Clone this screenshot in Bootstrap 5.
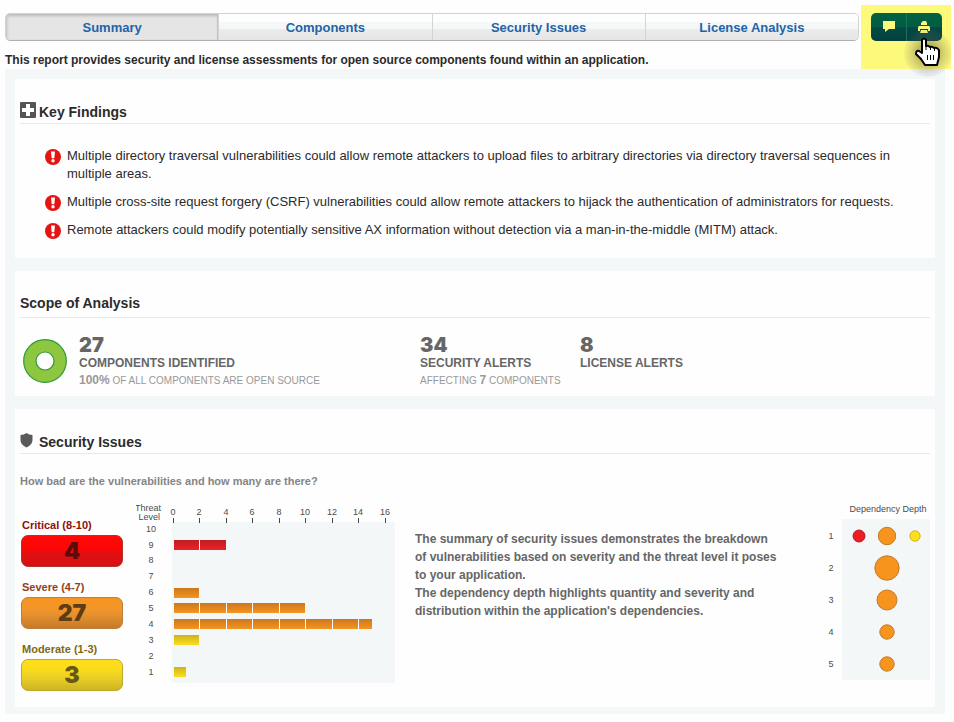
<!DOCTYPE html>
<html lang="en">
<head>
<meta charset="utf-8">
<meta name="viewport" content="width=device-width, initial-scale=1">
<title>Application Security Report</title>
<link href="https://cdn.jsdelivr.net/npm/bootstrap@5.3.0/dist/css/bootstrap.min.css" rel="stylesheet">
<style>
body { font: 13px/18px "Liberation Sans", Arial, sans-serif; color: #2b2b2b; background: #fefefe; }
h2, p, ul { margin: 0; }
.report-top { padding: 5px 3px 0 5px; gap: 2px; }
.report-tabs { margin-top: 8px; height: 28px; border: 1px solid #d2d2d2; border-bottom-color: #b0b0b0; border-radius: 5px; overflow: hidden; }
.report-tabs a { flex: 1 1 0; line-height: 27px; font-size: 13px; font-weight: 700; text-align: center; text-decoration: none; color: #2263a8; border-left: 1px solid #d4d4d4; background: linear-gradient(#fefefe 0 30%, #f4f8f9 32% 56%, #ebebeb 60%, #e6e6e6); }
.report-tabs a:first-child { border-left: 0; }
.report-tabs a.active { background: #e5e5e5; box-shadow: inset 1px 2px 3px #bbb, inset -1px 0 1px #c4c4c4; }
.intro { margin-top: 10px; font-size: 12px; font-weight: 700; }
.tool-zone { width: 90px; height: 64px; padding: 8px 9px 0 10px; background: #fdf97b; }
.tool-group { height: 28px; border-radius: 5px; overflow: hidden; background: linear-gradient(#00633f, #045c46 50%, #044a43 52%, #03403f); }
.tool-group button { flex: 1; padding: 0; border: 0; background: none; line-height: 0; }
.tool-group button + button { border-left: 1px solid #1f7259; }
.pointer { left: 40px; top: 20px; pointer-events: none; z-index: 2; }
.report-body { margin: 0 9px 8px 5px; padding: 10px 10px 7px; background: #f3f7f8; gap: 13px; }
.panel { background: #fefefe; padding: 0 5px; }
.panel-head { padding: 23px 0 1px; border-bottom: 1px solid #e7eaea; gap: 3px; }
.panel-head h2 { font-size: 14px; line-height: 20px; font-weight: 700; }
.scope .panel-head { padding: 22px 0 4px; }
.findings { padding: 23px 18px 19px 25px; gap: 10px; }
.findings li { gap: 6px; }
.findings svg { margin-top: 2px; }
.scope-row { padding: 18px 0 6px 3px; color: #666; }
.ring { margin: 3px 12px 0 0; }
.fact-wide { width: 341px; }
.fact-mid { width: 160px; }
.fact-num { font: 900 20px/19px Inter, "Liberation Sans", sans-serif; }
.fact-name { font-size: 12px; line-height: 16px; font-weight: 700; }
.fact-note { font-size: 10px; line-height: 18px; color: #999; }
.fact-note b { font-size: 12px; }
.question { margin-top: 18px; font-size: 11px; font-weight: 700; color: #858585; }
.issues { padding: 8px 0 16px; }
.levels { width: 102px; margin: 18px 13px 0 1px; gap: 11px; }
.level-name { font-size: 11px; line-height: 19px; font-weight: 700; padding-left: 1px; }
.level-box { height: 32px; border-radius: 7px; font: 900 23px/30px Inter, "Liberation Sans", sans-serif; text-align: center; border: 1px solid; }
.crit { color: #8f0f0f; } .sev { color: #93401b; } .mod { color: #7c6a14; }
.crit .level-box { color: #5c0b0d; background: linear-gradient(#ff0a08, #fa0606 45%, #dd1012 60%, #d60f10); border-color: #b3322b; }
.sev .level-box { color: #5e3d16; background: linear-gradient(#f7951f, #f2952a 40%, #df8c30 65%, #c67a24); border-color: #bd7f3e; }
.mod .level-box { color: #665717; background: linear-gradient(#fedd1b, #fbdc1c 30%, #e6cc28 65%, #cdb420); border-color: #bda92f; }
.summary-text { flex: 0 1 390px; margin: 32px 0 0 20px; font-size: 12px; font-weight: 700; color: #666; }
.chart text { font-family: "Liberation Sans", Arial, sans-serif; font-size: 9px; fill: #4c4c4c; }
</style>
</head>
<body>
<header class="report-top d-flex">
  <div class="flex-grow-1">
    <nav class="report-tabs d-flex" aria-label="Report sections">
      <a href="#summary" class="active" aria-current="page">Summary</a>
      <a href="#components">Components</a>
      <a href="#security">Security Issues</a>
      <a href="#license">License Analysis</a>
    </nav>
    <p class="intro">This report provides security and license assessments for open source components found within an application.</p>
  </div>
  <div class="tool-zone position-relative flex-shrink-0">
    <div class="tool-group d-flex">
      <button type="button" aria-label="Comment"><svg width="13" height="12" viewBox="0 0 13 12" fill="#fdf97b"><path d="M1 0h12v8H7L3 11V8H1z"/></svg></button>
      <button type="button" aria-label="Print"><svg width="14" height="14" viewBox="0 0 14 14" fill="#fdf97b"><path d="M3 5V3l2-2h3l1 2v2zM1 6h10l1 1v4h-2V9H2v2H0V7zM3 10h6l1 3H2z"/></svg></button>
    </div>
    <svg class="pointer position-absolute" width="56" height="56" viewBox="0 0 56 56">
      <defs><radialGradient id="halo"><stop offset=".25" stop-color="#554f20" stop-opacity=".5"/><stop offset="1" stop-color="#777" stop-opacity=".06"/></radialGradient></defs>
      <circle cx="27" cy="28" r="24" fill="url(#halo)"/>
      <path d="M21 15q2-3 4 0v6q2-1 4 1 2-1 4 1 3-1 5 2v7l-2 8H24l-4-6-5-5q0-4 3-3l3 2z" fill="#fff" stroke="#000" stroke-width="2" stroke-linejoin="round"/>
      <path d="M25 20v5M29.500 22v3M33.500 23v3M26.500 30v5M29.500 30v5M32.500 30v5" stroke="#000"/>
    </svg>
  </div>
</header>

<main class="report-body d-flex flex-column">
  <section class="panel">
    <div class="panel-head d-flex">
      <svg width="16" height="16" viewBox="0 0 16 16"><rect width="16" height="16" rx="1" fill="#555"/><path d="M6 2h4v4h4v4h-4v4H6v-4H2V6h4z" fill="#fff"/></svg>
      <h2>Key Findings</h2>
    </div>
    <svg class="d-none"><symbol id="alert" viewBox="0 0 16 16"><circle cx="8" cy="8" r="8" fill="#e61313"/><path d="M6 2.500h4L9.300 9.200H6.700z" fill="#fff"/><circle cx="8" cy="11.800" r="1.700" fill="#fff"/></symbol></svg>
    <ul class="findings list-unstyled d-flex flex-column">
      <li class="d-flex"><svg class="flex-shrink-0" width="16" height="16"><use href="#alert"/></svg><span>Multiple directory traversal vulnerabilities could allow remote attackers to upload files to arbitrary directories via directory traversal sequences in multiple areas.</span></li>
      <li class="d-flex"><svg class="flex-shrink-0" width="16" height="16"><use href="#alert"/></svg><span>Multiple cross-site request forgery (CSRF) vulnerabilities could allow remote attackers to hijack the authentication of administrators for requests.</span></li>
      <li class="d-flex"><svg class="flex-shrink-0" width="16" height="16"><use href="#alert"/></svg><span>Remote attackers could modify potentially sensitive AX information without detection via a man-in-the-middle (MITM) attack.</span></li>
    </ul>
  </section>

  <section class="panel scope">
    <div class="panel-head"><h2>Scope of Analysis</h2></div>
    <div class="scope-row d-flex">
      <svg class="ring flex-shrink-0" width="44" height="44" viewBox="0 0 44 44"><circle cx="22" cy="22" r="15.200" fill="none" stroke="#8dc63f" stroke-width="12.500"/><g fill="none" stroke="#349a3c" stroke-width="1.200"><circle cx="22" cy="22" r="21.300"/><circle cx="22" cy="22" r="9"/></g></svg>
      <div class="fact-wide"><div class="fact-num">27</div><div class="fact-name">COMPONENTS IDENTIFIED</div><div class="fact-note"><b>100%</b> OF ALL COMPONENTS ARE OPEN SOURCE</div></div>
      <div class="fact-mid"><div class="fact-num">34</div><div class="fact-name">SECURITY ALERTS</div><div class="fact-note">AFFECTING <b>7</b> COMPONENTS</div></div>
      <div><div class="fact-num">8</div><div class="fact-name">LICENSE ALERTS</div></div>
    </div>
  </section>

  <section class="panel">
    <div class="panel-head d-flex">
      <svg width="16" height="16" viewBox="0 0 16 16"><path d="M6.500 1Q9 3 12.500 3v5q0 5-6 7.500Q.5 13 .5 8V3Q4 3 6.500 1z" fill="#5a5a5a"/></svg>
      <h2>Security Issues</h2>
    </div>
    <p class="question">How bad are the vulnerabilities and how many are there?</p>
    <div class="issues d-flex">
      <div class="levels d-flex flex-column flex-shrink-0">
        <div class="crit"><div class="level-name">Critical (8-10)</div><div class="level-box">4</div></div>
        <div class="sev"><div class="level-name">Severe (4-7)</div><div class="level-box">27</div></div>
        <div class="mod"><div class="level-name">Moderate (1-3)</div><div class="level-box">3</div></div>
      </div>
      <svg class="chart flex-shrink-0" width="259" height="186" viewBox="136 498 259 186" role="img" aria-label="Issues by threat level">
        <defs>
          <linearGradient id="gr" x2="0" y2="1"><stop stop-color="#bd1e25"/><stop offset="1" stop-color="#ed2228"/></linearGradient>
          <linearGradient id="go" x2="0" y2="1"><stop stop-color="#c9781f"/><stop offset="1" stop-color="#f7941e"/></linearGradient>
          <linearGradient id="gy" x2="0" y2="1"><stop stop-color="#cdb31c"/><stop offset="1" stop-color="#fddd1d"/></linearGradient>
        </defs>
        <rect x="172" y="522" width="223" height="161" fill="#f3f7f8"/>
        <path d="M173.500 518v5M199.500 518v5M226.500 518v5M252.500 518v5M279.500 518v5M305.500 518v5M332.500 518v5M358.500 518v5M385.500 518v5" stroke="#444"/>
        <g text-anchor="end"><text x="161" y="511">Threat</text><text x="160" y="520">Level</text></g>
        <g text-anchor="middle">
          <text x="173" y="515">0</text><text x="199" y="515">2</text><text x="226" y="515">4</text><text x="252" y="515">6</text><text x="279" y="515">8</text><text x="305" y="515">10</text><text x="332" y="515">12</text><text x="358" y="515">14</text><text x="385" y="515">16</text>
          <text x="151" y="532">10</text><text x="151" y="548">9</text><text x="151" y="563">8</text><text x="151" y="579">7</text><text x="151" y="595">6</text><text x="151" y="611">5</text><text x="151" y="627">4</text><text x="151" y="643">3</text><text x="151" y="659">2</text><text x="151" y="675">1</text>
        </g>
        <rect x="174" y="540" width="52" height="10" fill="url(#gr)"/>
        <rect x="174" y="588" width="25" height="10" fill="url(#go)"/>
        <rect x="174" y="603" width="131" height="10" fill="url(#go)"/>
        <rect x="174" y="619" width="198" height="10" fill="url(#go)"/>
        <rect x="174" y="635" width="25" height="10" fill="url(#gy)"/>
        <rect x="174" y="667" width="12" height="10" fill="url(#gy)"/>
        <path d="M199.500 540v10M199.500 603v10M226.500 603v10M252.500 603v10M279.500 603v10M199.500 619v10M226.500 619v10M252.500 619v10M279.500 619v10M305.500 619v10M332.500 619v10M358.500 619v10" stroke="#fefefe"/>
      </svg>
      <p class="summary-text">The summary of security issues demonstrates the breakdown<br>of vulnerabilities based on severity and the threat level it poses<br>to your application.<br>The dependency depth highlights quantity and severity and<br>distribution within the application's dependencies.</p>
      <svg class="chart ms-auto flex-shrink-0" width="105" height="186" viewBox="825 498 105 186" role="img" aria-label="Dependency depth">
        <rect x="842" y="519" width="88" height="161" fill="#f3f7f8"/>
        <text x="888" y="512" text-anchor="middle">Dependency Depth</text>
        <g text-anchor="middle"><text x="831" y="539">1</text><text x="831" y="571">2</text><text x="831" y="603">3</text><text x="831" y="635">4</text><text x="831" y="667">5</text></g>
        <circle cx="859" cy="536" r="6" fill="#ed1c24" stroke="#b81a20"/>
        <circle cx="915" cy="536" r="5.200" fill="#fddf1a" stroke="#cfb527"/>
        <g fill="#f7941e" stroke="#c67a2b"><circle cx="887" cy="536" r="8.700"/><circle cx="887" cy="568" r="12.200"/><circle cx="887" cy="600" r="10"/><circle cx="887" cy="632" r="7.200"/><circle cx="887" cy="664" r="7.200"/></g>
      </svg>
    </div>
  </section>
</main>
<script src="https://cdn.jsdelivr.net/npm/bootstrap@5.3.0/dist/js/bootstrap.bundle.min.js"></script>
</body>
</html>
